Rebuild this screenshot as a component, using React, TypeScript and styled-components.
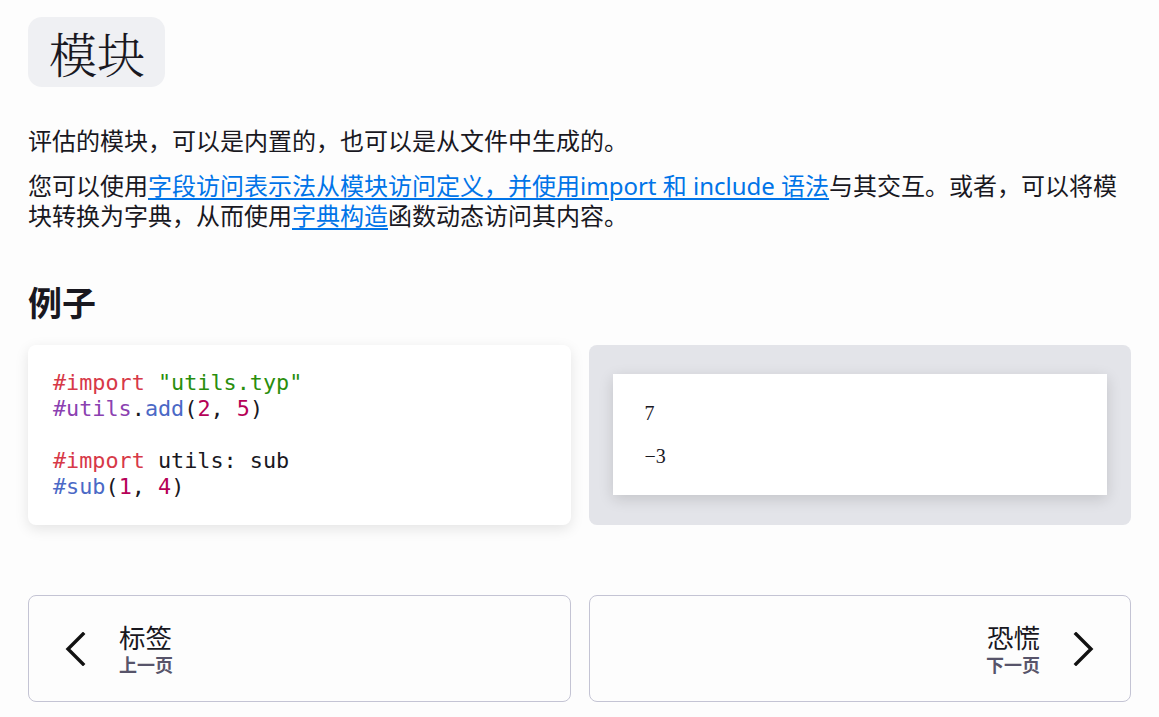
import styled, { createGlobalStyle } from "styled-components";

const GlobalStyle = createGlobalStyle`
  body {
    margin: 0;
    background: #fdfdfd;
    color: #19181f;
    font-family: "Noto Sans", "Noto Sans CJK SC", sans-serif;
  }
`;

type Tok = { t: string; c?: string };

const C = {
  kw: "#d73948",
  str: "#298e0d",
  mod: "#8b41b1",
  fn: "#4b69c6",
  num: "#b60157",
};

const codeLines: Tok[][] = [
  [{ t: "#import", c: C.kw }, { t: " " }, { t: '"utils.typ"', c: C.str }],
  [
    { t: "#utils", c: C.mod },
    { t: "." },
    { t: "add", c: C.fn },
    { t: "(" },
    { t: "2", c: C.num },
    { t: ", " },
    { t: "5", c: C.num },
    { t: ")" },
  ],
  [],
  [{ t: "#import", c: C.kw }, { t: " utils: sub" }],
  [
    { t: "#sub", c: C.fn },
    { t: "(" },
    { t: "1", c: C.num },
    { t: ", " },
    { t: "4", c: C.num },
    { t: ")" },
  ],
];

function Chevron({ dir }: { dir: "left" | "right" }) {
  return (
    <svg width="22" height="34" viewBox="0 0 22 34" fill="none">
      <path
        d={dir === "left" ? "M18 2 L3 17 L18 32" : "M4 2 L19 17 L4 32"}
        stroke="#111"
        strokeWidth="3.4"
        strokeLinecap="square"
      />
    </svg>
  );
}

export default function App() {
  return (
    <Page>
      <GlobalStyle />
      <Title>模块</Title>
      <Para>评估的模块，可以是内置的，也可以是从文件中生成的。</Para>
      <Para>
        您可以使用<Link href="#">字段访问表示法从模块访问定义，并使用import 和 include 语法</Link>
        与其交互。或者，可以将模块转换为字典，从而使用<Link href="#">字典构造</Link>
        函数动态访问其内容。
      </Para>
      <Heading>例子</Heading>
      <Example>
        <CodeCard>
          {codeLines.map((line, i) => (
            <CodeLine key={i}>
              {line.length === 0
                ? "\u00a0"
                : line.map((tok, j) => (
                    <Tok key={j} $color={tok.c}>
                      {tok.t}
                    </Tok>
                  ))}
            </CodeLine>
          ))}
        </CodeCard>
        <Preview>
          <Sheet>
            <Result>7</Result>
            <Result>−3</Result>
          </Sheet>
        </Preview>
      </Example>
      <Nav>
        <NavButton href="#">
          <Chevron dir="left" />
          <NavText>
            <NavTitle>标签</NavTitle>
            <NavHint>上一页</NavHint>
          </NavText>
        </NavButton>
        <NavButton href="#" $right>
          <NavText $right>
            <NavTitle>恐慌</NavTitle>
            <NavHint>下一页</NavHint>
          </NavText>
          <Chevron dir="right" />
        </NavButton>
      </Nav>
    </Page>
  );
}

const Page = styled.main`
  padding: 17px 28px 14px;
  display: flex;
  flex-direction: column;
  align-items: flex-start;
`;

const Title = styled.h1`
  margin: 0 0 39px;
  height: 70px;
  padding: 0 20px 0 21px;
  display: flex;
  align-items: center;
  background: #eff0f3;
  border-radius: 14px;
  font-family: "Noto Serif CJK SC", "Liberation Serif", serif;
  font-size: 48px;
  font-weight: 300;
  color: #19181f;
`;

const Para = styled.p`
  margin: 0 0 15px;
  font-size: 24px;
  line-height: 30px;
  color: #19181f;
`;

const Link = styled.a`
  color: #0074e8;
  text-decoration: underline;
  text-underline-offset: 3px;
  text-decoration-thickness: 2px;
`;

const Heading = styled.h2`
  margin: 33px 0 0;
  font-size: 34px;
  line-height: 48px;
  font-weight: 700;
`;

const Example = styled.div`
  margin-top: 18px;
  width: 100%;
  display: grid;
  grid-template-columns: 1fr 1fr;
  gap: 18px;
  height: 177px;
`;

const CodeCard = styled.pre`
  margin: 0;
  box-sizing: border-box;
  height: 100%;
  padding: 25px 25px;
  background: #ffffff;
  border-radius: 8px;
  box-shadow: 0 4px 14px rgba(0, 0, 0, 0.1);
  font-family: "DejaVu Sans Mono", monospace;
  font-size: 21.8px;
  line-height: 26px;
  color: #19181f;
`;

const CodeLine = styled.div`
  white-space: pre;
`;

const Tok = styled.span<{ $color?: string }>`
  color: ${(p) => p.$color ?? "#19181f"};
`;

const Preview = styled.div`
  box-sizing: border-box;
  height: 100%;
  background: #e3e4e9;
  border-radius: 8px;
  padding: 29px 24px 30px;
`;

const Sheet = styled.div`
  background: #ffffff;
  height: 100%;
  box-sizing: border-box;
  padding: 27px 32px 23px;
  display: flex;
  flex-direction: column;
  gap: 19px;
  box-shadow: 0 4px 14px rgba(0, 0, 0, 0.14);
`;

const Result = styled.div`
  font-family: "Liberation Serif", serif;
  font-size: 20px;
  line-height: 24px;
  color: #19181f;
`;

const Nav = styled.nav`
  margin-top: 73px;
  width: 100%;
  display: grid;
  grid-template-columns: 1fr 1fr;
  gap: 18px;
`;

const NavButton = styled.a<{ $right?: boolean }>`
  height: 107px;
  box-sizing: border-box;
  border: 1px solid #c4c4d4;
  border-radius: 8px;
  display: flex;
  align-items: center;
  justify-content: ${(p) => (p.$right ? "flex-end" : "flex-start")};
  gap: 32px;
  padding: ${(p) => (p.$right ? "0 36px 0 0" : "0 0 0 36px")};
  text-decoration: none;
  color: #19181f;
`;

const NavText = styled.div<{ $right?: boolean }>`
  display: flex;
  flex-direction: column;
  align-items: ${(p) => (p.$right ? "flex-end" : "flex-start")};
`;

const NavTitle = styled.span`
  font-size: 26.5px;
  line-height: 32px;
`;

const NavHint = styled.span`
  font-size: 18px;
  line-height: 22px;
  font-weight: 700;
  color: #57546a;
`;
